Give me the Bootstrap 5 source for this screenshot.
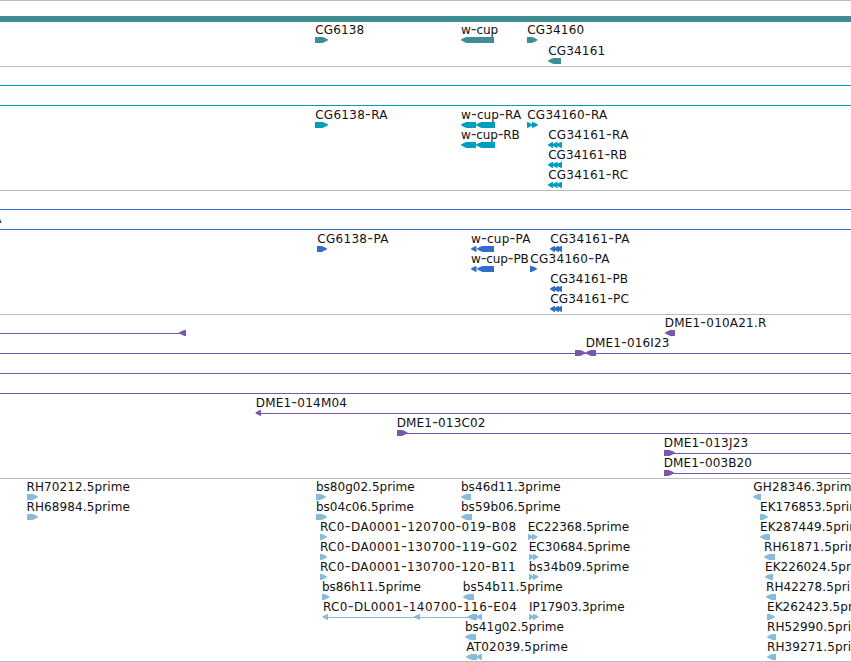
<!DOCTYPE html>
<html lang="en">
<head>
    <meta charset="UTF-8">
    <meta name="viewport" content="width=device-width, initial-scale=1">
    <title>Genome browser</title>
    <!-- Bootstrap CSS -->
    <link href="https://cdn.jsdelivr.net/npm/bootstrap@5.3.2/dist/css/bootstrap.min.css" rel="stylesheet">
    <style>
        body {
            width: 851px;
            height: 662px;
            font-family: "DejaVu Sans", sans-serif;
        }
        .browser {
            border-top: 1px solid #bcbcbc;
        }
        .track {
            border-bottom: 1px solid #bcbcbc;
        }
        .track text {
            font-size: 12px;
            fill: #111;
        }
        .track .dash {
            font-size: 16px;
            fill: #333;
        }
        .genes { color: #3e8e94; }
        .transcripts { color: #009dbf; }
        .proteins { color: #316dca; }
        .clones { color: #7759a8; }
        .ests { color: #87bbdc; }
    </style>
</head>
<body class="bg-white overflow-hidden">
    <main class="browser d-flex flex-column">
        <section class="track genes"><svg class="d-block" id="genes" width="851" height="65" viewBox="0 1 851 65"></svg></section>
        <section class="track transcripts"><svg class="d-block" id="transcripts" width="851" height="123" viewBox="0 67 851 123"></svg></section>
        <section class="track proteins"><svg class="d-block" id="proteins" width="851" height="123" viewBox="0 191 851 123"></svg></section>
        <section class="track clones"><svg class="d-block" id="clones" width="851" height="163" viewBox="0 315 851 163"></svg></section>
        <section class="track ests"><svg class="d-block" id="ests" width="851" height="182" viewBox="0 479 851 182"></svg></section>
    </main>

    <!-- Bootstrap JS -->
    <script src="https://cdn.jsdelivr.net/npm/bootstrap@5.3.2/dist/js/bootstrap.bundle.min.js"></script>

    <script>
        // Each row: y, lines [from, to], exons [strand, from, to], labels [text, left, right]
        const tracks = {
            genes: [
                { y: 37, exons: [["+", 315, 328], ["-", 461, 494], ["+", 527, 537.5]],
                  labels: [["CG6138", 315.2, 363.5], ["w-cup", 461, 497.5], ["CG34160", 527.2, 583.5]] },
                { y: 58, exons: [["-", 548, 561]], labels: [["CG34161", 548.2, 604.5]] }
            ],
            transcripts: [
                { y: 82, lines: [[0, 851]] },
                { y: 102, lines: [[0, 851]] },
                { y: 122, exons: [["+", 315, 328], ["-", 461, 476], ["-", 476, 495], ["+", 527, 532.5], ["+", 532, 538]],
                  labels: [["CG6138-RA", 315.2, 388.3], ["w-cup-RA", 461, 522], ["CG34160-RA", 527.2, 608]] },
                { y: 142, exons: [["-", 461, 476], ["-", 476, 495], ["-", 548, 553], ["-", 552, 557.5], ["-", 556, 562]],
                  labels: [["w-cup-RB", 461, 519.5], ["CG34161-RA", 548.2, 629.2]] },
                { y: 162, exons: [["-", 548, 553], ["-", 552, 557.5], ["-", 556, 562]], labels: [["CG34161-RB", 548.2, 626.7]] },
                { y: 182, exons: [["-", 548, 553], ["-", 552, 557.5], ["-", 556, 562]], labels: [["CG34161-RC", 548.2, 627.7]] }
            ],
            proteins: [
                { y: 206, lines: [[0, 851]] },
                { y: 226, lines: [[0, 851]], labels: [["PA", -13, 2.3]] },
                { y: 246, exons: [["+", 317, 327], ["-", 471, 476.5], ["-", 477, 494], ["-", 550, 555], ["-", 553.5, 559], ["-", 557, 562]],
                  labels: [["CG6138-PA", 317.2, 389.2], ["w-cup-PA", 471, 531.2], ["CG34161-PA", 550.2, 630.2]] },
                { y: 266, exons: [["-", 471, 476.5], ["-", 477, 494], ["+", 530, 537]],
                  labels: [["w-cup-PB", 471, 528.5], ["CG34160-PA", 530.2, 610.2]] },
                { y: 286, exons: [["-", 550, 555], ["-", 553.5, 559], ["-", 557, 562]], labels: [["CG34161-PB", 550.2, 627.7]] },
                { y: 306, exons: [["-", 550, 555], ["-", 553.5, 559], ["-", 557, 562]], labels: [["CG34161-PC", 550.2, 628.5]] }
            ],
            clones: [
                { y: 330, lines: [[0, 182]], exons: [["-", 179, 186], ["-", 665, 675]], labels: [["DME1-010A21.R", 665.7, 766]] },
                { y: 350, lines: [[0, 851]], exons: [["+", 575, 585.5], ["-", 585.5, 596]], labels: [["DME1-016I23", 586.7, 668.7]] },
                { y: 370, lines: [[0, 851]] },
                { y: 390, lines: [[0, 851]] },
                { y: 410, lines: [[256, 851]], exons: [["-", 255.5, 261]], labels: [["DME1-014M04", 256.7, 346.3]] },
                { y: 430, lines: [[398, 851]], exons: [["+", 397, 407.5]], labels: [["DME1-013C02", 397.7, 484.8]] },
                { y: 450, lines: [[665, 851]], exons: [["+", 664, 675]], labels: [["DME1-013J23", 664.7, 747.5]] },
                { y: 470, lines: [[665, 851]], exons: [["+", 664, 674]], labels: [["DME1-003B20", 664.7, 751.3]] }
            ],
            ests: [
                { y: 494, exons: [["+", 27, 38], ["+", 316, 326], ["-", 461, 471], ["-", 753, 761]],
                  labels: [["RH70212.5prime", 27.5, 129.5], ["bs80g02.5prime", 316.9, 414.3], ["bs46d11.3prime", 461.9, 560.3], ["GH28346.3prime", 753.3, 858.7]] },
                { y: 514, exons: [["+", 27, 38], ["+", 316, 327], ["-", 461, 472], ["+", 760, 768]],
                  labels: [["RH68984.5prime", 27.5, 129.5], ["bs04c06.5prime", 316.9, 413.5], ["bs59b06.5prime", 461.9, 560.3], ["EK176853.5prime", 761, 868]] },
                { y: 534, exons: [["+", 320, 327], ["+", 528, 533], ["+", 532, 537.5], ["-", 760, 770]],
                  labels: [["RC0-DA0001-120700-019-B08", 320.9, 515.5], ["EC22368.5prime", 528.7, 628.7], ["EK287449.5prime", 761, 868]] },
                { y: 554, exons: [["+", 320, 327], ["+", 529, 534], ["+", 533, 538.5], ["-", 764, 775]],
                  labels: [["RC0-DA0001-130700-119-G02", 320.9, 516.7], ["EC30684.5prime", 529.7, 629.7], ["RH61871.5prime", 765, 867]] },
                { y: 574, exons: [["+", 320, 327], ["+", 529, 534], ["+", 533, 538.5], ["-", 765, 773]],
                  labels: [["RC0-DA0001-130700-120-B11", 320.9, 515], ["bs34b09.5prime", 529.7, 628.7], ["EK226024.5prime", 766, 873]] },
                { y: 594, exons: [["+", 322, 329.5], ["-", 463, 474], ["-", 766, 776]],
                  labels: [["bs86h11.5prime", 322.9, 420.5], ["bs54b11.5prime", 463.7, 562.3], ["RH42278.5prime", 767, 869]] },
                { y: 614, lines: [[324, 470]], exons: [["-", 322.5, 328], ["-", 414, 420], ["-", 467.5, 477], ["-", 476.5, 482], ["+", 529, 534], ["+", 533, 538.5], ["+", 767, 775]],
                  labels: [["RC0-DL0001-140700-116-E04", 323.9, 516.3], ["IP17903.3prime", 529.9, 624.3], ["EK262423.5prime", 768, 875]] },
                { y: 634, exons: [["-", 465, 476], ["-", 767, 776]],
                  labels: [["bs41g02.5prime", 465.9, 563.5], ["RH52990.5prime", 768, 870]] },
                { y: 654, exons: [["-", 466, 477], ["-", 476, 482], ["-", 767, 776]],
                  labels: [["AT02039.5prime", 466.3, 567.5], ["RH39271.5prime", 768, 870]] }
            ]
        };

        const pen = document.createElement("canvas").getContext("2d");
        pen.font = '12px "DejaVu Sans"';

        function add(parent, tag, attrs) {
            const el = document.createElementNS("http://www.w3.org/2000/svg", tag);
            for (const key in attrs) el.setAttribute(key, attrs[key]);
            parent.appendChild(el);
            return el;
        }

        // A block with a blunt arrow head at its 3' end
        function drawExon(svg, y, strand, x1, x2) {
            const tip = Math.min(5.5, x2 - x1 - 0.5);
            const [tail, head, dir] = strand === "+" ? [x1, x2, 1] : [x2, x1, -1];
            const neck = head - dir * tip;
            const cheek = head - dir * tip * 0.5;
            const points = [[tail, y], [neck, y], [cheek, y + 1.1], [head, y + 2.5], [head, y + 3.3], [cheek, y + 4.7], [neck, y + 6], [tail, y + 6]];
            add(svg, "polygon", { points: points.join(" "), fill: "currentColor" });
        }

        // Spread the letters so that the ink runs from left to right
        function drawLabel(svg, y, text, left, right) {
            const el = add(svg, "text", { y: y - 3 });
            text.split(/(-)/).forEach(part => {
                add(el, "tspan", part === "-" ? { class: "dash" } : {}).textContent = part;
            });
            const before = -pen.measureText(text[0]).actualBoundingBoxLeft;
            const last = pen.measureText(text[text.length - 1]);
            const after = last.width - last.actualBoundingBoxRight;
            const ink = el.getComputedTextLength() - before - after;
            el.setAttribute("x", left - before);
            el.setAttribute("letter-spacing", ((right - left - ink) / (text.length - 1)).toFixed(3));
        }

        // The chromosome bar
        add(document.getElementById("genes"), "rect", { x: 0, y: 16, width: 851, height: 6, fill: "currentColor" });

        for (const id in tracks) {
            const svg = document.getElementById(id);
            tracks[id].forEach(row => {
                (row.lines || []).forEach(([x1, x2]) => add(svg, "rect", { x: x1, y: row.y + 3, width: x2 - x1, height: 1, fill: "currentColor" }));
                (row.exons || []).forEach(exon => drawExon(svg, row.y, ...exon));
                (row.labels || []).forEach(label => drawLabel(svg, row.y, ...label));
            });
        }
    </script>
</body>
</html>
